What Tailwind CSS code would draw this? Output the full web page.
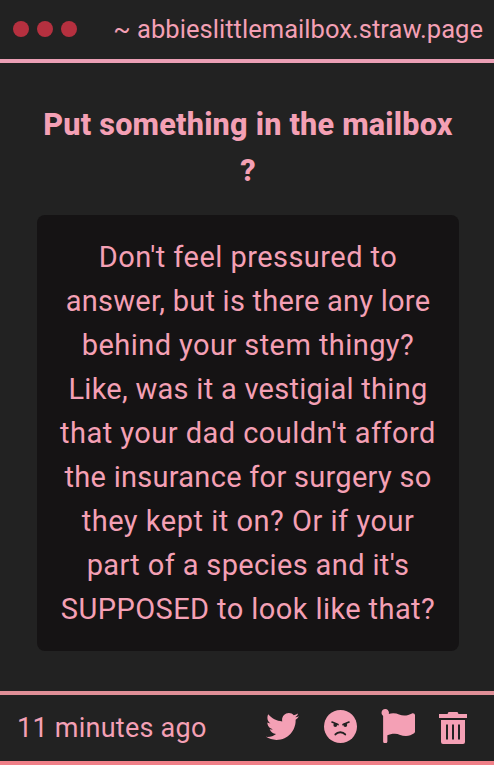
<!DOCTYPE html>
<html lang="en">
<head>
    <meta charset="UTF-8" />
    <meta name="viewport" content="width=device-width, initial-scale=1.0"/>
    <title>abbieslittlemailbox.straw.page</title>
    <script src="https://cdn.jsdelivr.net/npm/@tailwindcss/browser@4"></script>
</head>
<body class="bg-[#222222] text-[#f4a0b5] font-[Roboto,sans-serif]">
    <div class="w-[494px] h-[765px] flex flex-col overflow-hidden">
        <header class="h-[63px] shrink-0 flex items-center justify-between pl-[13px] pr-[11px] pb-[2px] border-b-4 border-[#eb9fb5]">
            <div class="flex gap-2">
                <span class="size-4 rounded-full bg-[#b5303f]"></span>
                <span class="size-4 rounded-full bg-[#b5303f]"></span>
                <span class="size-4 rounded-full bg-[#b5303f]"></span>
            </div>
            <p class="text-[25.5px] leading-9 tracking-[0.04px] whitespace-nowrap">~ abbieslittlemailbox.straw.page</p>
        </header>

        <main class="flex-1 pl-[37px] pr-[35px] pt-[39px] text-center whitespace-nowrap">
            <h1 class="text-[30.6px] leading-[46px] font-extrabold tracking-[0.22px]">Put something in the mailbox<br>?</h1>
            <div class="mt-[21px] h-[436px] pt-5 rounded-lg bg-[#151314]">
                <p class="text-[29px] leading-[44px] *:block">
                    <span class="tracking-[0.46px]">Don't feel pressured to</span>
                    <span class="tracking-[0.25px]">answer, but is there any lore</span>
                    <span class="tracking-[0.43px]">behind your stem thingy?</span>
                    <span class="tracking-[0.28px]">Like, was it a vestigial thing</span>
                    <span class="tracking-[0.46px]">that your dad couldn't afford</span>
                    <span class="tracking-[0.28px]">the insurance for surgery so</span>
                    <span class="tracking-[0.52px]">they kept it on? Or if your</span>
                    <span class="tracking-[0.36px]">part of a species and it's</span>
                    <span class="tracking-[0.42px]">SUPPOSED to look like that?</span>
                </p>
            </div>
        </main>

        <footer class="h-[74px] shrink-0 flex items-center justify-between pl-[17px] pr-[27px] border-y-4 border-t-[#e08f97] border-b-[#f08088]">
            <span class="text-[27px] tracking-[0.25px] whitespace-nowrap">11 minutes ago</span>
            <div class="flex items-center pb-1">
                <!-- twitter -->
                <svg class="w-[33px] h-[33px] mr-[25px]" viewBox="0 0 512 512" fill="currentColor"><path d="M459.37 151.716c.325 4.548.325 9.097.325 13.645 0 138.72-105.583 298.558-298.558 298.558-59.452 0-114.68-17.219-161.137-47.106 8.447.974 16.568 1.299 25.34 1.299 49.055 0 94.213-16.568 130.274-44.832-46.132-.975-84.792-31.188-98.112-72.772 6.498.974 12.995 1.624 19.818 1.624 9.421 0 18.843-1.3 27.614-3.573-48.081-9.747-84.143-51.98-84.143-102.985v-1.299c13.969 7.797 30.214 12.67 47.431 13.319-28.264-18.843-46.781-51.005-46.781-87.391 0-19.492 5.197-37.36 14.294-52.954 51.655 63.675 129.3 105.258 216.365 109.807-1.624-7.797-2.599-15.918-2.599-24.04 0-57.828 46.782-104.934 104.934-104.934 30.213 0 57.502 12.67 76.67 33.137 23.715-4.548 46.456-13.32 66.599-25.34-7.798 24.366-24.366 44.833-46.132 57.827 21.117-2.273 41.584-8.122 60.426-16.243-14.292 20.791-32.161 39.308-52.628 54.253z"/></svg>
                <!-- angry face -->
                <svg class="w-[33px] h-[33px] mr-6" viewBox="0 0 33 33" fill="none" stroke="#222222" stroke-linecap="round">
                    <circle cx="16.5" cy="16.5" r="16.5" fill="#f4a0b5" stroke="none"/>
                    <path stroke-width="1.6" d="M8 12l6 2.6M25 12l-6 2.6"/>
                    <path stroke-width="1.9" d="M11.4 24.4c2.4-2.9 7.4-2.9 9.8 0"/>
                    <circle cx="11.3" cy="15" r="1.9" fill="#222222" stroke="none"/>
                    <circle cx="21.3" cy="15" r="1.9" fill="#222222" stroke="none"/>
                </svg>
                <!-- flag -->
                <svg class="w-[34px] h-[34px] mr-6" viewBox="0 0 512 512" fill="currentColor"><path d="M349.565 98.783C295.978 98.783 251.721 64 184.348 64c-24.955 0-47.309 4.384-68.045 12.013a55.947 55.947 0 0 0 3.586-23.562C118.117 24.015 94.806 1.206 66.338.048 34.345-1.254 8 24.296 8 56c0 19.026 9.497 35.825 24 45.945V488c0 13.255 10.745 24 24 24h16c13.255 0 24-10.745 24-24v-94.4c28.311-12.064 63.582-22.122 114.435-22.122 53.588 0 97.844 34.783 165.217 34.783 48.169 0 86.667-16.294 122.505-40.858C506.84 359.452 512 349.571 512 339.045v-243.1c0-23.393-24.269-38.87-45.485-29.016-34.338 15.948-76.454 31.854-116.95 31.854z"/></svg>
                <!-- trash -->
                <svg class="w-7 h-8 mt-1" viewBox="0 0 28 32" fill="currentColor" fill-rule="evenodd"><path d="M9.5 0h9l1 2H28v4H0V2h8.500zM2 8h24v22a2 2 0 0 1-2 2H4a2 2 0 0 1-2-2zM7 12.500v15h2v-15zM13 12.500v15h2v-15zM19 12.500v15h2v-15z"/></svg>
            </div>
        </footer>
    </div>
</body>
</html>
